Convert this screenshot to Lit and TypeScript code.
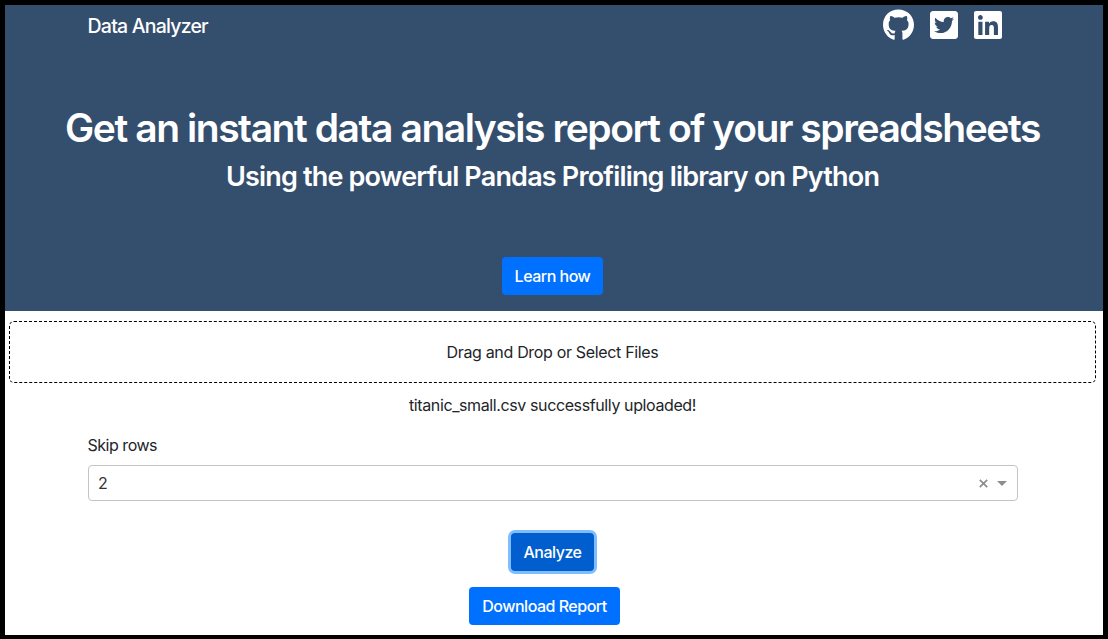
import { LitElement, html, css, svg } from "lit";
import { customElement, property } from "lit/decorators.js";

const ICONS: Record<string, { w: number; d: string }> = {
  github: {
    w: 496,
    d: "M165.9 397.4c0 2-2.3 3.6-5.2 3.6-3.3.3-5.6-1.3-5.6-3.6 0-2 2.3-3.6 5.2-3.6 3-.3 5.6 1.3 5.6 3.6zm-31.1-4.5c-.7 2 1.3 4.3 4.3 4.9 2.6 1 5.6 0 6.2-2s-1.3-4.3-4.3-5.2c-2.6-.7-5.5.3-6.2 2.3zm44.2-1.7c-2.9.7-4.9 2.6-4.6 4.9.3 2 2.9 3.3 5.9 2.6 2.9-.7 4.9-2.6 4.6-4.6-.3-1.9-3-3.2-5.9-2.9zM244.8 8C106.1 8 0 113.3 0 252c0 110.9 69.8 205.8 169.5 239.2 12.8 2.3 17.3-5.6 17.3-12.1 0-6.2-.3-40.4-.3-61.4 0 0-70 15-84.7-29.8 0 0-11.4-29.1-27.8-36.6 0 0-22.9-15.7 1.6-15.4 0 0 24.9 2 38.6 25.8 21.9 38.6 58.6 27.5 72.9 20.9 2.3-16 8.8-27.1 16-33.7-55.9-6.2-112.3-14.3-112.3-110.5 0-27.5 7.6-41.3 23.6-58.9-2.6-6.5-11.1-33.3 2.6-67.9 20.9-6.5 69 27 69 27 20-5.6 41.5-8.5 62.8-8.5s42.8 2.9 62.8 8.5c0 0 48.1-33.6 69-27 13.7 34.7 5.2 61.4 2.6 67.9 16 17.7 25.8 31.5 25.8 58.9 0 96.5-58.9 104.2-114.8 110.5 9.2 7.9 17 22.9 17 46.4 0 33.7-.3 75.4-.3 83.6 0 6.5 4.6 14.4 17.3 12.1C428.2 457.8 496 362.9 496 252 496 113.3 383.5 8 244.8 8z",
  },
  twitter: {
    w: 448,
    d: "M400 32H48C21.5 32 0 53.5 0 80v352c0 26.5 21.5 48 48 48h352c26.5 0 48-21.5 48-48V80c0-26.5-21.5-48-48-48zm-48.9 158.8c.2 2.8.2 5.7.2 8.5 0 86.7-66 186.6-186.6 186.6-37.2 0-71.7-10.8-100.7-29.4 5.3.6 10.4.8 15.8.8 30.7 0 58.9-10.4 81.4-28-28.8-.6-53-19.5-61.3-45.5 10.1 1.5 19.2 1.5 29.6-1.2-30-6.1-52.5-32.5-52.5-64.4v-.8c8.7 4.9 18.9 7.9 29.6 8.3a65.447 65.447 0 0 1-29.2-54.6c0-12.2 3.2-23.4 8.9-33.1 32.3 39.8 80.8 65.8 135.2 68.6-9.3-44.5 24-80.6 64-80.6 18.9 0 35.9 7.9 47.9 20.7 14.8-2.8 29-8.3 41.6-15.8-4.9 15.2-15.2 28-28.8 36.1 13.2-1.4 26-5.1 37.8-10.2-8.9 13.1-20.1 24.7-32.9 34z",
  },
  linkedin: {
    w: 448,
    d: "M416 32H31.9C14.3 32 0 46.5 0 64.3v383.4C0 465.5 14.3 480 31.9 480H416c17.6 0 32-14.5 32-32.3V64.3c0-17.8-14.4-32.3-32-32.3zM135.4 416H69V202.2h66.5V416zm-33.2-243c-21.3 0-38.5-17.3-38.5-38.5S80.9 96 102.2 96c21.2 0 38.5 17.3 38.5 38.5 0 21.3-17.2 38.5-38.5 38.5zm282.1 243h-66.4V312c0-24.8-.5-56.7-34.5-56.7-34.6 0-39.9 27-39.9 54.9V416h-66.4V202.2h63.7v29.2h.9c8.9-16.8 30.6-34.5 62.2-34.5 66.5 0 79.9 43.8 79.9 100.9V416z",
  },
};

@customElement("brand-icon")
export class BrandIcon extends LitElement {
  @property() name = "github";

  static styles = css`
    :host { display: block; }
    .glyph { display: block; height: 32px; width: auto; fill: #fff; }
  `;

  render() {
    const icon = ICONS[this.name];
    return html`<svg class="glyph" viewBox="0 0 ${icon.w} 512" width=${icon.w / 16} height="32">
      ${svg`<path d=${icon.d}></path>`}
    </svg>`;
  }
}

@customElement("app-root")
export class AppRoot extends LitElement {
  static styles = css`
    :host {
      display: block;
      font-family: Inter, "Liberation Sans", sans-serif;
      font-size: 16px;
      line-height: 24px;
      color: #212529;
    }
    * { box-sizing: border-box; }
    .page {
      width: 1108px;
      height: 639px;
      border: 5px solid #000;
      border-bottom-width: 4px;
      background: #fff;
      overflow: hidden;
      display: flex;
      flex-direction: column;
    }
    .hero {
      height: 306px;
      flex: none;
      background: #344e6e;
      color: #fff;
      padding-right: 3px;
      display: flex;
      flex-direction: column;
      align-items: center;
    }
    .nav {
      width: 100%;
      height: 99px;
      padding: 4px 98.4px 0 82.6px;
      display: flex;
      justify-content: space-between;
      align-items: flex-start;
    }
    .brand {
      font-size: 19.5px;
      font-weight: 500;
      line-height: 30px;
      padding-top: 2px;
      letter-spacing: -0.8px;
    }
    .social { display: flex; gap: 16px; }
    h1, h2 { margin: 0; font-weight: 600; white-space: nowrap; }
    h1 { font-size: 39px; line-height: 48px; letter-spacing: -1.44px; margin-bottom: 8px; }
    h2 { font-size: 27px; line-height: 34px; letter-spacing: -0.82px; margin-bottom: 63px; }
    .btn {
      display: block;
      height: 38px;
      padding: 0;
      border: 0;
      border-radius: 4px;
      background: #0071ff;
      color: #fff;
      font: inherit;
      font-weight: 500;
      letter-spacing: -0.5px;
      white-space: nowrap;
    }
    .learn { width: 101px; }
    .analyze {
      width: 83px;
      background: #005ecf;
      box-shadow: 0 0 0 3px #80bdff;
      margin-bottom: 16px;
    }
    .download { width: 151px; margin-right: 16px; }
    .drop {
      flex: none;
      height: 62px;
      margin: 10px 7px 10px 4px;
      border: 1px dashed #000;
      border-radius: 5px;
      display: flex;
      align-items: center;
      justify-content: center;
      letter-spacing: -0.33px;
    }
    .status { text-align: center; letter-spacing: -0.39px; padding-right: 3px; }
    .form { margin: 16px 85px 32px 83px; }
    .label { letter-spacing: -0.47px; margin: 0 0 8px -0.5px; }
    .select {
      height: 36px;
      border: 1px solid #c4c4c4;
      border-radius: 4px;
      display: flex;
      align-items: center;
      padding: 0 10px 0 9px;
      color: #333;
    }
    .value { flex: 1; }
    .clear { width: 9px; height: 9px; margin-right: 9.5px; stroke: #8e8e8e; stroke-width: 1.5; }
    .caret { width: 10px; height: 5px; fill: #8e8e8e; }
    .actions { display: flex; flex-direction: column; align-items: center; padding-right: 3px; }
  `;

  render() {
    return html`
      <div class="page">
        <header class="hero">
          <nav class="nav">
            <span class="brand">Data Analyzer</span>
            <div class="social">
              ${["github", "twitter", "linkedin"].map((n) => html`<brand-icon name=${n}></brand-icon>`)}
            </div>
          </nav>
          <h1>Get an instant data analysis report of your spreadsheets</h1>
          <h2>Using the powerful Pandas Profiling library on Python</h2>
          <button class="btn learn">Learn how</button>
        </header>
        <div class="drop">Drag and Drop or Select Files</div>
        <div class="status">titanic_small.csv successfully uploaded!</div>
        <div class="form">
          <div class="label">Skip rows</div>
          <div class="select">
            <span class="value">2</span>
            <svg class="clear" viewBox="0 0 8 8"><path d="M.7.7l6.6 6.6M7.3.7L.7 7.3"></path></svg>
            <svg class="caret" viewBox="0 0 10 5"><path d="M0 0h10L5 5z"></path></svg>
          </div>
        </div>
        <div class="actions">
          <button class="btn analyze">Analyze</button>
          <button class="btn download">Download Report</button>
        </div>
      </div>
    `;
  }
}
